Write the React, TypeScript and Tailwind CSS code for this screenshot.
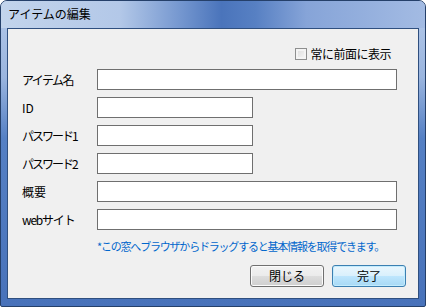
import React from 'react';

const font = "font-['Noto_Sans_CJK_JP','Liberation_Sans',sans-serif]";

interface FieldProps {
  label: string;
  wide?: boolean;
  tracking?: string;
}

function Field({ label, wide, tracking }: FieldProps) {
  return (
    <div className="flex items-center h-[21px]">
      <div className={`w-[75px] text-[12px] leading-none text-black ${tracking ?? ''}`}>{label}</div>
      <div
        className={`h-[21px] bg-white border border-[#6f6f6f] ${wide ? 'w-[300px]' : 'w-[156px]'}`}
      />
    </div>
  );
}

function WinButton({ label, isDefault }: { label: string; isDefault?: boolean }) {
  return (
    <div
      className={`w-[74px] h-[22px] rounded-[3px] border flex items-center justify-center text-[12px] leading-none text-black ${
        isDefault
          ? 'border-[#3c7fb1] bg-[linear-gradient(to_bottom,#eaf6fd_0%,#d9f0fc_50%,#bee6fd_50%,#a7d9f5_100%)] shadow-[inset_0_0_0_1px_#c3ecfd]'
          : 'border-[#707070] bg-[linear-gradient(to_bottom,#f2f2f2_0%,#ebebeb_50%,#dddddd_50%,#cfcfcf_100%)] shadow-[inset_0_0_0_1px_#fbfbfb]'
      }`}
    >
      {label}
    </div>
  );
}

export default function App() {
  return (
    <div className={`w-[426px] h-[307px] ${font}`}>
      <div className="w-full h-full flex flex-col rounded-t-[7px] rounded-b-[2px] border border-[#25406a] bg-[linear-gradient(to_bottom,#b4c9e9_0%,#9ab5df_25%,#5580c4_45%,#4872ba_100%)] overflow-hidden">
        {/* Title bar */}
        <div className="h-[27px] shrink-0 flex items-center pl-[7px] bg-[linear-gradient(to_right,#c2d4ec_0%,#b3c8e8_28%,#7698d0_42%,#4a74bb_52%,#5780c3_60%,#86a4d8_72%,#a3bbe3_100%)]">
          <span className="text-[12px] leading-none text-black mt-[-2px]">アイテムの編集</span>
        </div>

        {/* Client area */}
        <div className="flex-1 mx-[6px] mb-[7px] border border-[#2f4f7f] bg-[#f0f0f0] flex flex-col">
          <div className="flex justify-end items-center pr-[27px] pt-[12px] h-[25px] box-content">
            <div className="w-[12px] h-[12px] border border-[#8e8f8f] bg-[linear-gradient(135deg,#dcdcdc,#f7f7f7)] shadow-[inset_0_0_0_2px_#f4f4f4] mr-[3px]" />
            <span className="text-[12px] leading-none text-black tracking-[-0.5px]">常に前面に表示</span>
          </div>

          <div className="flex flex-col gap-[7px] pl-[14px] mt-[3px]">
            <Field label="アイテム名" wide tracking="tracking-[-1.6px]" />
            <Field label="ID" />
            <Field label="パスワード1" tracking="tracking-[-2px]" />
            <Field label="パスワード2" tracking="tracking-[-2px]" />
            <Field label="概要" wide />
            <Field label="webサイト" wide tracking="tracking-[-1.2px]" />
          </div>

          <div className="pl-[89px] mt-[11px] text-[11px] leading-none text-[#0066cc] tracking-[-1.2px]">
            *この窓へブラウザからドラッグすると基本情報を取得できます。
          </div>

          <div className="flex justify-end gap-[8px] pr-[12px] mt-[13px]">
            <WinButton label="閉じる" />
            <WinButton label="完了" isDefault />
          </div>
        </div>
      </div>
    </div>
  );
}
